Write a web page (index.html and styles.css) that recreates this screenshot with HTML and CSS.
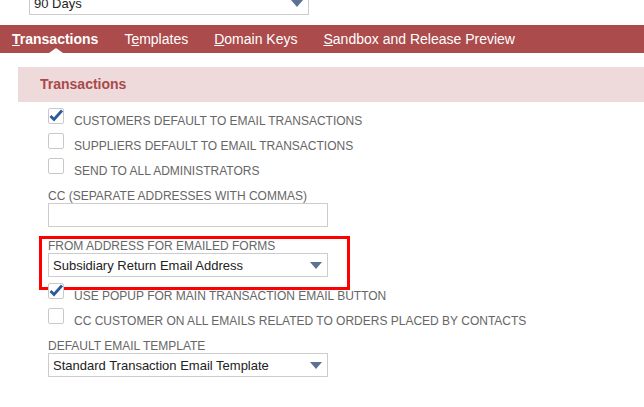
FILE: index.html
```html
<!DOCTYPE html>
<html lang="en">
<head>
<meta charset="utf-8">
<title>Email Preferences</title>
<link rel="stylesheet" href="styles.css">
</head>
<body>
<div class="top">
  <div class="select"><span class="select-text">90 Days</span><span class="arrow"></span></div>
</div>
<nav class="tabs">
  <a class="tab active"><u>T</u>ransactions</a>
  <a class="tab">T<u>e</u>mplates</a>
  <a class="tab"><u>D</u>omain Keys</a>
  <a class="tab"><u>S</u>andbox and Release Preview</a>
</nav>
<section class="panel">
  <div class="panel-head">Transactions</div>
  <div class="panel-body">
    <div class="checks">
      <div class="check-row"><span class="cb"><svg viewBox="0 0 16 16" width="16" height="16"><polyline points="2.5,8 6,11.5 14,2.5" /></svg></span><span class="cb-label">CUSTOMERS DEFAULT TO EMAIL TRANSACTIONS</span></div>
      <div class="check-row"><span class="cb"></span><span class="cb-label">SUPPLIERS DEFAULT TO EMAIL TRANSACTIONS</span></div>
      <div class="check-row"><span class="cb"></span><span class="cb-label">SEND TO ALL ADMINISTRATORS</span></div>
    </div>
    <div class="field after-checks">
      <div class="field-label">CC (SEPARATE ADDRESSES WITH COMMAS)</div>
      <div class="input"></div>
    </div>
    <div class="field after-control highlighted">
      <div class="field-label">FROM ADDRESS FOR EMAILED FORMS</div>
      <div class="select"><span class="select-text">Subsidiary Return Email Address</span><span class="arrow"></span></div>
      <div class="highlight"></div>
    </div>
    <div class="checks after-select">
      <div class="check-row"><span class="cb"><svg viewBox="0 0 16 16" width="16" height="16"><polyline points="2.5,8 6,11.5 14,2.5" /></svg></span><span class="cb-label">USE POPUP FOR MAIN TRANSACTION EMAIL BUTTON</span></div>
      <div class="check-row"><span class="cb"></span><span class="cb-label">CC CUSTOMER ON ALL EMAILS RELATED TO ORDERS PLACED BY CONTACTS</span></div>
    </div>
    <div class="field after-checks">
      <div class="field-label">DEFAULT EMAIL TEMPLATE</div>
      <div class="select"><span class="select-text">Standard Transaction Email Template</span><span class="arrow"></span></div>
    </div>
  </div>
</section>
</body>
</html>
```
FILE: styles.css
```css
* { box-sizing: border-box; }
html, body { margin: 0; padding: 0; background: #fff; }
body {
  font-family: "Liberation Sans", Arial, sans-serif;
  width: 644px;
  height: 407px;
  overflow: hidden;
}
.top {
  display: flex;
  align-items: flex-start;
  height: 25px;
  padding-left: 29px;
}
.top .select { margin-top: -9px; }

.select {
  width: 280px;
  height: 24px;
  border: 1px solid #cccccc;
  background: #fff;
  display: flex;
  align-items: center;
  justify-content: space-between;
  padding: 0 5px 0 4px;
  font-size: 13px;
  color: #222;
}
.arrow {
  width: 0;
  height: 0;
  border-left: 6.5px solid transparent;
  border-right: 6.5px solid transparent;
  border-top: 7px solid #5c7193;
}

.tabs {
  display: flex;
  height: 28px;
  background: #ab4b4b;
}
.tab {
  position: relative;
  color: #fff;
  font-size: 14px;
  line-height: 28px;
  padding: 0 14px 0 12px;
  white-space: nowrap;
}
.tab.active { font-weight: bold; }
.tab.active::after {
  content: "";
  position: absolute;
  left: 50%;
  bottom: 0;
  margin-left: -7px;
  border-left: 7px solid transparent;
  border-right: 7px solid transparent;
  border-bottom: 5px solid #fff;
}

.panel { margin: 14px 0 0 18px; }
.panel-head {
  height: 35px;
  line-height: 35px;
  background: #eedadb;
  padding-left: 22px;
  font-size: 14px;
  font-weight: bold;
  color: #a84a4b;
}
.panel-body { padding: 6px 0 0 30px; }

.check-row {
  display: flex;
  align-items: flex-start;
  height: 25px;
}
.cb {
  width: 16px;
  height: 16px;
  border: 1px solid #c9c9c9;
  border-radius: 2px;
  background: #fff;
  margin-right: 10px;
  position: relative;
  flex: none;
}
.cb svg {
  position: absolute;
  left: -1px;
  top: -1px;
  overflow: visible;
}
.cb polyline {
  fill: none;
  stroke: #2c5a9b;
  stroke-width: 2.8;
}
.cb-label {
  font-size: 12px;
  line-height: 23px;
  padding-top: 2px;
  color: #666;
  white-space: nowrap;
}

.field { position: relative; width: 280px; }
.after-checks { margin-top: 5px; }
.after-control { margin-top: 11px; }
.after-select { margin-top: 6px; }
.field-label {
  font-size: 12px;
  line-height: 13px;
  padding-top: 2px;
  color: #666;
  white-space: nowrap;
}
.input {
  width: 280px;
  height: 24px;
  border: 1px solid #cccccc;
  background: #fff;
}
.highlight {
  position: absolute;
  left: -9px;
  top: -2px;
  width: 311px;
  height: 54px;
  border: 3px solid #f00;
  pointer-events: none;
}
```
